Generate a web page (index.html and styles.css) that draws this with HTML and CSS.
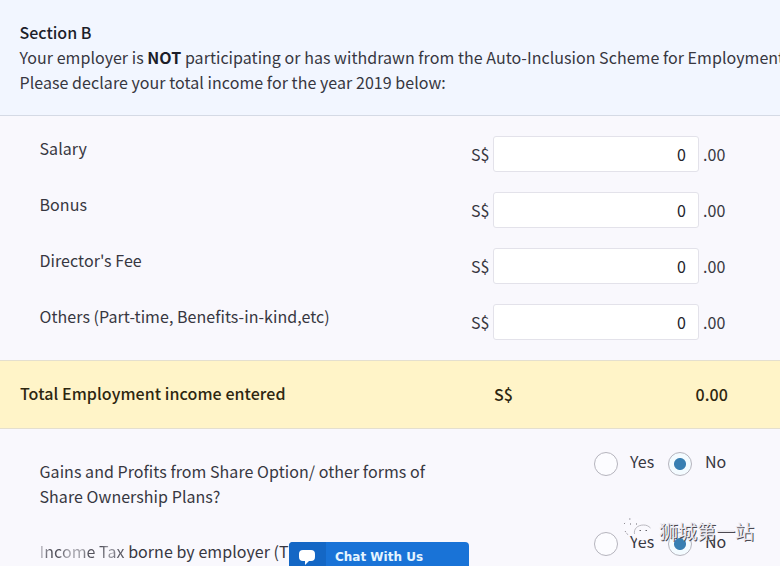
FILE: index.html
```
<!DOCTYPE html>
<html lang="en">
<head>
<meta charset="utf-8">
<title>Employment income</title>
<link rel="stylesheet" href="styles.css">
</head>
<body>
<main class="page">
  <header class="intro">
    <h1 class="intro-title">Section B</h1>
    <p class="intro-line long">Your employer is <b>NOT</b> participating or has withdrawn from the Auto-Inclusion Scheme for Employment</p>
    <p class="intro-line">Please declare your total income for the year 2019 below:</p>
  </header>
  <section class="income">
    <div class="row"><span class="label">Salary</span><span class="cur">S$</span><span class="field">0</span><span class="cents">.00</span></div>
    <div class="row"><span class="label">Bonus</span><span class="cur">S$</span><span class="field">0</span><span class="cents">.00</span></div>
    <div class="row"><span class="label">Director's Fee</span><span class="cur">S$</span><span class="field">0</span><span class="cents">.00</span></div>
    <div class="row"><span class="label">Others (Part-time, Benefits-in-kind,etc)</span><span class="cur">S$</span><span class="field">0</span><span class="cents">.00</span></div>
  </section>
  <section class="total">
    <span class="total-label">Total Employment income entered</span>
    <span class="total-cur">S$</span>
    <span class="total-value">0.00</span>
  </section>
  <section class="questions">
    <div class="question">
      <p class="q-text">Gains and Profits from Share Option/ other forms of<br>Share Ownership Plans?</p>
      <div class="options"><i class="radio"></i><span class="yes">Yes</span><i class="radio on"></i><span class="no">No</span></div>
    </div>
    <div class="question">
      <p class="q-text"><span class="faded">Income Tax</span> borne by employer (T</p>
      <div class="options"><i class="radio"></i><span class="yes">Yes</span><i class="radio on"></i><span class="no">No</span></div>
    </div>
  </section>
  <div class="watermark">
    <svg class="wechat" width="32" height="26" viewBox="0 0 32 26">
      <ellipse cx="12" cy="10" rx="10" ry="8.5" fill="#faf9fe"/>
      <path d="M2 7l2-2M7 2h3M3 14l3 4" stroke="#77757d" stroke-width=".8" stroke-dasharray="1.5 1.5" fill="none"/>
      <ellipse cx="21" cy="16" rx="9" ry="7.5" fill="#faf9fe"/>
      <path d="M12.500 17c-1-5 3-9 9-9 3 0 5 1 7 3" stroke="#aaa8b0" stroke-width=".8" fill="none"/>
      <path d="M8 7h1M14 7h1M17.500 13.500h1.500M23.500 13.500h1.500" stroke="#66646c" stroke-width="1"/>
    </svg>
    <span class="mark-text">狮城第一站</span>
  </div>
  <button class="chat">
    <span class="chat-icon"><svg width="18" height="16" viewBox="0 0 18 16"><path d="M5 0h8q4 0 4 4v3q0 4-4 4h-2l-4 4v-4H5q-4 0-4-4V4q0-4 4-4z" fill="#fff"/></svg></span>
    <span class="chat-text">Chat With Us</span>
  </button>
</main>
</body>
</html>
```
FILE: styles.css
```
* { box-sizing: border-box; }
body { margin: 0; }
.page {
  position: relative;
  width: 780px;
  height: 566px;
  overflow: hidden;
  background: #f9f8fd;
  color: #373741;
  font: 400 16px/25px "Noto Sans CJK SC", sans-serif;
  letter-spacing: .055px;
  white-space: nowrap;
}
p, h1 { margin: 0; }
.intro {
  height: 116px;
  padding: 20px 0 0 19.500px;
  background: #f2f6ff;
  border-bottom: 1px solid #d5dae5;
}
.intro-title { font-size: 16px; line-height: 25px; font-weight: 500; letter-spacing: 0; color: #1c1e2a; }
.intro .long { letter-spacing: .04px; }
.intro b { font-weight: 700; color: #1c1e2a; }
.income { height: 244px; padding-top: 20px; }
.row { display: flex; height: 56px; padding-left: 39.500px; }
.label { width: 431.500px; }
.cur { width: 22px; padding-top: 6px; }
.field {
  width: 206px;
  height: 36px;
  padding: 5px 12px 0 0;
  background: #fff;
  border: 1px solid #e3e2ea;
  border-radius: 3px;
  text-align: right;
  color: #22222a;
}
.cents { padding: 6px 0 0 4px; }
.total {
  display: flex;
  height: 69px;
  padding: 20px 0 0 20px;
  background: #fff4c8;
  border: solid #e4dfcf;
  border-width: 1px 0;
  color: #2d2610;
  font-weight: 500;
  letter-spacing: .075px;
}
.total-label { width: 474px; }
.total-cur { width: 100px; padding-top: 1px; }
.total-value { width: 134px; padding-top: 1px; text-align: right; }
.questions { padding: 30px 0 0 39.500px; }
.question { display: flex; height: 80px; }
.q-text { width: 554.500px; }
.options { display: flex; height: 25px; margin-top: -10px; }
.radio {
  width: 24px;
  height: 24px;
  margin-top: 3px;
  border: 1px solid #b5b4bd;
  border-radius: 50%;
  background: #fcfcff;
}
.radio.on { background: radial-gradient(circle, #377fb2 5.5px, #f3fbff 6.500px); }
.yes { width: 50px; padding-left: 12px; }
.no { padding-left: 13px; }
.faded {
  background: linear-gradient(100deg, #b0afb7 0 5px, #53525c 12px 22px, #a3a2aa 30px 44px, #53525c 50px 62px, #92919a 68px 74px, #5a5963 80px);
  background-clip: text;
  -webkit-background-clip: text;
  color: transparent;
}
.watermark {
  position: absolute;
  left: 622px;
  top: 517px;
  display: flex;
  letter-spacing: 0;
}
.mark-text {
  margin-left: 5px;
  color: #e9e8ee;
  font-size: 19px;
  font-weight: 400;
  line-height: 27px;
  text-shadow: 1px 1px 0 #4b4951;
}
.chat {
  position: absolute;
  left: 289px;
  top: 542px;
  display: flex;
  width: 180px;
  height: 32px;
  padding: 0;
  border: 0;
  border-radius: 4px 4px 0 0;
  overflow: hidden;
  background: #1973d7;
  color: #e5f5ff;
}
.chat-icon { width: 37px; height: 32px; padding: 8px 0 0 9px; background: #1467c5; text-align: left; }
.chat-icon svg { display: block; }
.chat-text {
  padding: 6px 0 0 9px;
  font: 700 12px/18px "DejaVu Sans", sans-serif;
}
```
